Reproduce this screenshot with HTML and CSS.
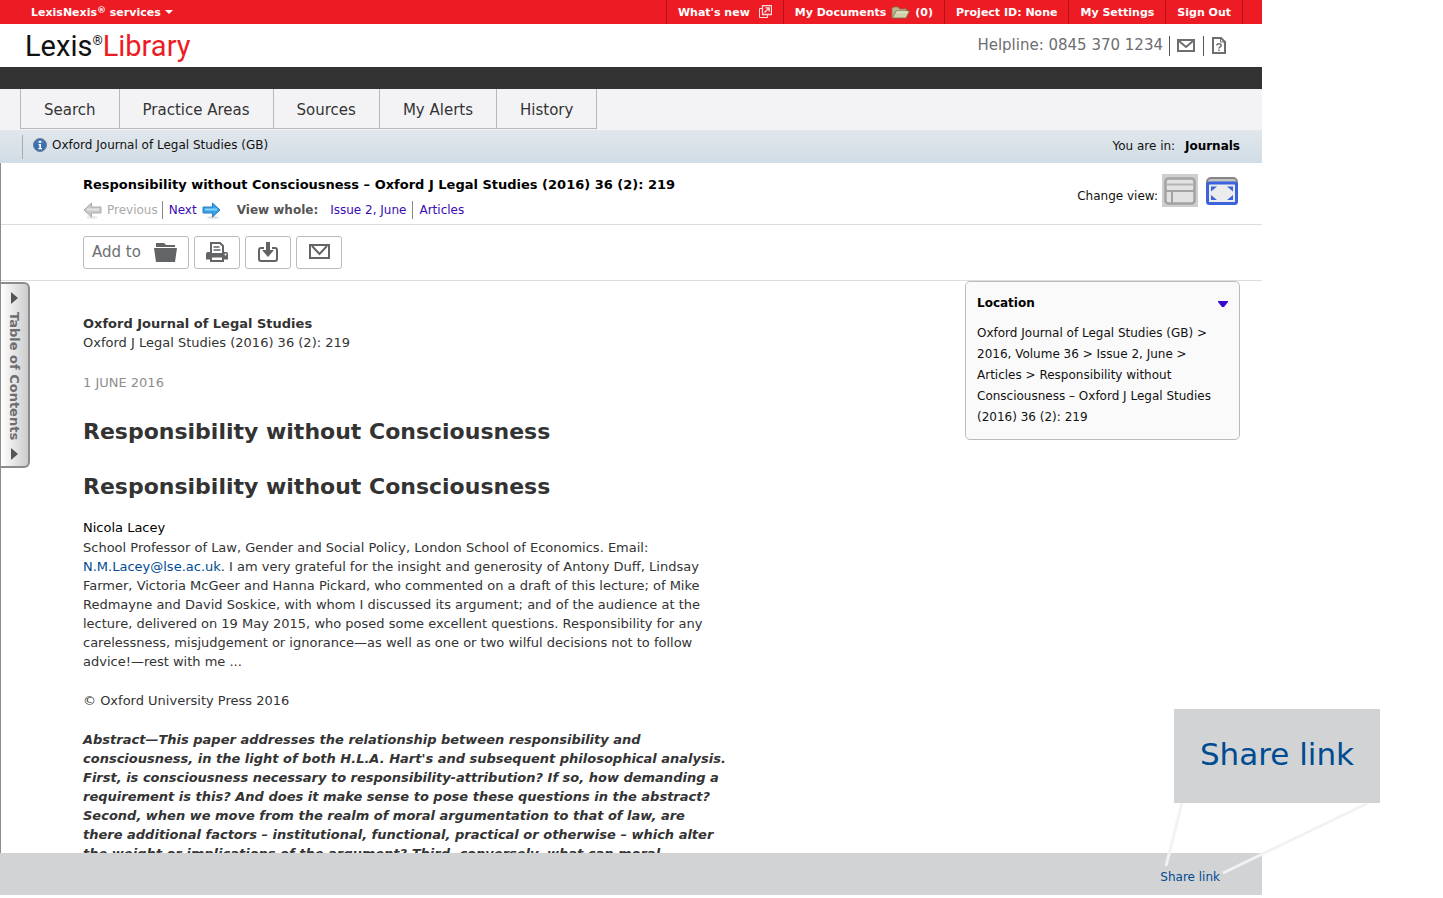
FILE: index.html
```html
<!DOCTYPE html>
<html lang="en">
<head>
<meta charset="utf-8">
<title>Lexis Library - Responsibility without Consciousness</title>
<link rel="stylesheet" href="styles.css">
</head>
<body>
<div class="page">
  <header>
    <div class="topbar">
      <button class="services" type="button"><span>LexisNexis<sup>®</sup> services</span>
        <svg width="8" height="4" viewBox="0 0 8 4"><path d="M0 0h8L4 4z" fill="#fff"/></svg>
      </button>
      <nav class="account" aria-label="Account">
        <a href="#" class="news">What's new
          <svg width="13" height="13" viewBox="0 0 13 13" fill="none" stroke="#ffdcdc"><path d="M3.500 3.500h-3v9h8v-3"/><path d="M3.500.5h9v9h-9z" stroke-width="1.300"/><path d="M5.500 7.500l4.500-4.500M6.500 2.800h3.700v3.700" stroke-width="1.300"/></svg>
        </a>
        <a href="#">My Documents
          <svg width="19" height="13" viewBox="0 0 19 13"><path d="M1 12V2.500L2.500 1h4.500l1.500 2h7v3" fill="#b9b58d" stroke="#817c52" stroke-width=".8"/><path d="M1.500 12L5 5h13.500L15 12z" fill="#d3d1ac" stroke="#777347" stroke-width=".8"/><path d="M5.500 6h11.500" stroke="#f6f5df"/></svg>
          (0)</a>
        <a href="#">Project ID: None</a>
        <a href="#">My Settings</a>
        <a href="#">Sign Out</a>
      </nav>
    </div>
    <div class="brandbar">
      <a class="logo" href="#">Lexis<sup>®</sup><span>Library</span></a>
      <div class="help">
        <span>Helpline: 0845 370 1234</span>
        <a href="#" aria-label="Email us"><svg width="18" height="13" viewBox="0 0 18 13" fill="none" stroke="#6d6e71" stroke-width="2"><path d="M1 1h16v11H1z"/><path d="M2 2l7 6 7-6"/></svg></a>
        <a href="#" aria-label="Help"><svg width="14" height="17" viewBox="0 0 14 17" fill="none" stroke="#6d6e71" stroke-width="2"><path d="M1 1h8l4 4v11H1z"/><path d="M8.500 1v4H13" stroke-width="1"/><path d="M4.800 8.500c0-2.500 4.400-2.200 4.400 0 0 1.300-2.200 1.300-2.200 3M7 12.500v1.500" stroke-width="1.500"/></svg></a>
      </div>
    </div>
    <div class="band"></div>
    <nav class="tabs" aria-label="Main">
      <a href="#">Search</a><a href="#">Practice Areas</a><a href="#">Sources</a><a href="#">My Alerts</a><a href="#">History</a>
    </nav>
    <div class="crumb">
      <div class="source">
        <svg width="14" height="14" viewBox="0 0 14 14"><circle cx="7" cy="7" r="6.500" fill="#3c6faf" stroke="#6c7d98"/><path d="M3 4.500a5 4 0 0 1 8 0" fill="#7ba5d6"/><circle cx="7" cy="3.800" r="1.200" fill="#fff"/><path d="M5.500 6h2.500v4h1v1.300H5.300V10h1V7.200h-.8z" fill="#fff"/></svg>
        Oxford Journal of Legal Studies (GB)
      </div>
      <div class="where">You are in: <b>Journals</b></div>
    </div>
  </header>
  <main>
    <section class="dochead">
      <div>
        <h1>Responsibility without Consciousness – Oxford J Legal Studies (2016) 36 (2): 219</h1>
        <div class="pager">
          <span class="prev"><svg width="19" height="17" viewBox="0 0 19 17"><ellipse cx="9" cy="15.500" rx="6" ry="1.500" fill="#e8e8e8"/><path d="M1 8L8.500 1v4H18v6H8.500v4z" fill="#c9c9c9" stroke="#aaa"/><path d="M4 7.500h12" stroke="#e4e4e4" stroke-width="2"/></svg>Previous</span>
          <a class="next" href="#">Next<svg width="19" height="17" viewBox="0 0 19 17"><ellipse cx="11" cy="15.500" rx="6" ry="1.500" fill="#ddd"/><path d="M18 8L10.500 1v4H1v6h9.500v4z" fill="#35a0e8" stroke="#2d80bd"/><path d="M3 7.500h12" stroke="#8bd0fa" stroke-width="2"/></svg></a>
          <b>View whole:</b>
          <a class="issue" href="#">Issue 2, June</a>
          <a class="articles" href="#">Articles</a>
        </div>
      </div>
      <div class="views">
        <span>Change view:</span>
        <button type="button" aria-label="Standard view" class="current"><svg width="32" height="28" viewBox="0 0 32 28" fill="none" stroke="#a3a3a3"><rect x="1.500" y="1.500" width="29" height="25" rx="3" fill="#e2e2e2" stroke-width="2.500"/><path d="M2 7.500h28" stroke="#b4b4b4" stroke-width="2"/><path d="M2 14h28M8 14v12" stroke-width="2"/></svg></button>
        <button type="button" aria-label="Full screen view"><svg width="32" height="28" viewBox="0 0 32 28"><rect x="1" y="1" width="30" height="25" rx="4" fill="#c4c4c4" stroke="#858585" stroke-width="2"/><rect x="1.500" y="6" width="29" height="20.500" rx="2" fill="#ececec" stroke="#3b63dc" stroke-width="3"/><path d="M5 9.500h6l-6 5zM27 9.500h-6l6 5zM5 23h6l-6-5zM27 23h-6l6-5z" fill="#3b63dc"/></svg></button>
      </div>
    </section>
    <section class="tools">
      <button type="button" class="add">Add to
        <svg width="23" height="19" viewBox="0 0 23 19" fill="#636466"><path d="M2 3V0h8l2 2h9v2H2zM0 5h23l-2 14H2z"/></svg></button>
      <button type="button" aria-label="Print"><svg width="22" height="20" viewBox="0 0 22 20"><path d="M2 10h18q2 0 2 2v5.500H0V12q0-2 2-2z" fill="#636466"/><path d="M5 12V1h9l3 3v8z" fill="#fff" stroke="#636466" stroke-width="2"/><path d="M7.500 5h6M7.500 8h7" stroke="#636466" stroke-width="1.500"/><path d="M5 14.500h12V19H5z" fill="#fff" stroke="#636466" stroke-width="2"/><circle cx="19.500" cy="12.500" r="1" fill="#fff"/></svg></button>
      <button type="button" aria-label="Download"><svg width="20" height="20" viewBox="0 0 20 20" fill="none" stroke="#636466"><path d="M6 6H3Q1 6 1 8v9q0 2 2 2h14q2 0 2-2V8q0-2-2-2h-3" stroke-width="2"/><path d="M8 0h4v8h4l-6 7-6-7h4z" fill="#636466" stroke="none"/></svg></button>
      <button type="button" aria-label="Email"><svg width="21" height="15" viewBox="0 0 21 15" fill="none" stroke="#636466" stroke-width="2"><path d="M1 1h19v13H1z"/><path d="M3 2l7.500 8L18 2"/></svg></button>
    </section>
    <div class="content">
      <button type="button" class="toc">
        <svg width="8" height="12" viewBox="0 0 8 12"><path d="M0 0v12l7-6z" fill="#555"/></svg>
        <span>Table of Contents</span>
        <svg width="8" height="12" viewBox="0 0 8 12"><path d="M0 0v12l7-6z" fill="#555"/></svg>
      </button>
      <article>
        <h3>Oxford Journal of Legal Studies</h3>
        <p>Oxford J Legal Studies (2016) 36 (2): 219</p>
        <p class="date">1 JUNE 2016</p>
        <h2>Responsibility without Consciousness</h2>
        <h2>Responsibility without Consciousness</h2>
        <p class="author">Nicola Lacey</p>
        <p>School Professor of Law, Gender and Social Policy, London School of Economics. Email: <a href="#">N.M.Lacey@lse.ac.uk</a>. I am very grateful for the insight and generosity of Antony Duff, Lindsay Farmer, Victoria McGeer and Hanna Pickard, who commented on a draft of this lecture; of Mike Redmayne and David Soskice, with whom I discussed its argument; and of the audience at the lecture, delivered on 19 May 2015, who posed some excellent questions. Responsibility for any carelessness, misjudgement or ignorance—as well as one or two wilful decisions not to follow advice!—rest with me ...</p>
        <p class="copyright">© Oxford University Press 2016</p>
        <p class="abstract">Abstract—This paper addresses the relationship between responsibility and consciousness, in the light of both H.L.A. Hart's and subsequent philosophical analysis. First, is consciousness necessary to responsibility-attribution? If so, how demanding a requirement is this? And does it make sense to pose these questions in the abstract? Second, when we move from the realm of moral argumentation to that of law, are there additional factors – institutional, functional, practical or otherwise – which alter the weight or implications of the argument? Third, conversely, what can moral</p>
      </article>
      <aside class="location">
        <h4>Location <svg width="10" height="6" viewBox="0 0 10 6"><path d="M0 0h10v1L6 6H4L0 1z" fill="#3a0bcf"/></svg></h4>
        <p>Oxford Journal of Legal Studies (GB) &gt; 2016, Volume 36 &gt; Issue 2, June &gt; Articles &gt; Responsibility without Consciousness – Oxford J Legal Studies (2016) 36 (2): 219</p>
      </aside>
    </div>
  </main>
  <footer>
    <a href="#">Share link</a>
    <svg class="rays" width="220" height="80" viewBox="0 0 220 80" fill="none" stroke="#f2f2f3" stroke-width="3"><path d="M27 5L11 68"/><path d="M213 5L68 75"/></svg>
    <div class="callout">Share link</div>
  </footer>
</div>
</body>
</html>
```
FILE: styles.css
```css
* { box-sizing: border-box; }
body, h1, h2, h3, h4, p { margin: 0; }
body {
  background: #fff;
  color: #333;
  font-family: Verdana, "DejaVu Sans", sans-serif;
  font-size: 13px;
  line-height: 19px;
}
a { color: inherit; text-decoration: none; }
button { font: inherit; color: inherit; margin: 0; padding: 0; border: 0; background: none; }
svg { display: block; flex: none; }

.page {
  display: flex;
  flex-direction: column;
  height: 100vh;
  padding: 0 181px 3px 0;
}

.topbar {
  display: flex;
  justify-content: space-between;
  height: 24px;
  padding: 0 19px 0 31px;
  background: #ed1c24;
  color: #fff;
  font-size: 11px;
  font-weight: bold;
}
.services { display: flex; align-items: center; gap: 4px; }
.services sup { font-size: 9px; line-height: 0; vertical-align: 3px; }
.account { display: flex; border-right: 1px solid #b5121a; }
.account a {
  display: flex;
  align-items: center;
  gap: 5px;
  padding: 0 11px;
  border-left: 1px solid #b5121a;
}
.account .news { gap: 9px; }
.account .news svg { margin-bottom: 2px; }

.brandbar {
  display: flex;
  align-items: center;
  justify-content: space-between;
  height: 43px;
  padding: 0 28px 0 25px;
}
.logo { font-family: Roboto, sans-serif; font-size: 29px; line-height: 40px; color: #111; }
.logo sup { font-size: 13px; line-height: 0; vertical-align: 11px; }
.logo span { color: #ed1c24; }
.help { display: flex; align-items: center; font-size: 15px; color: #6d6e71; }
.help span { padding-right: 6px; }
.help a { display: flex; align-items: center; height: 20px; padding: 0 8px 0 7px; border-left: 1px solid #555; }
.help a + a { padding: 0 8px; }

.band { height: 22px; background: #333; }
.tabs { display: flex; height: 41px; padding: 0 20px 1px; background: #f3f3f6; font-size: 15px; }
.tabs a { display: flex; align-items: center; padding: 3px 23px 0; border: solid #b9b9bc; border-width: 0 1px 1px 0; }
.tabs a:first-child { border-left-width: 1px; }

.crumb {
  display: flex;
  align-items: center;
  justify-content: space-between;
  height: 33px;
  padding: 0 22px;
  background: linear-gradient(#e1e7ec, #d1dce5);
  color: #111;
  font-size: 12px;
}
.source { display: flex; align-items: center; gap: 5px; height: 24px; padding: 0 0 3px 10px; border-left: 1px solid #aaa; }
.where b { margin-left: 6px; color: #000; }

main { flex: 1; display: flex; flex-direction: column; min-height: 0; border-left: 1px solid #8d8d8d; overflow: hidden; }

.dochead {
  display: flex;
  justify-content: space-between;
  flex: none;
  height: 62px;
  padding: 11px 22px 0 82px;
  border-bottom: 1px solid #ddd;
  font-size: 12px;
}
.dochead h1 { font-size: 13px; line-height: 21px; color: #000; }
.pager { display: flex; align-items: center; margin-top: 6px; line-height: 18px; color: #555; }
.pager a { color: #3a0bb5; }
.prev { display: flex; align-items: center; gap: 5px; padding-right: 4px; color: #aaa; }
.next { display: flex; align-items: center; gap: 5px; padding-left: 6px; border-left: 1px solid #888; }
.pager b { margin: 0 12px 0 16px; }
.pager .issue { padding-right: 6px; }
.pager .articles { padding-left: 6px; border-left: 1px solid #888; }
.views { display: flex; align-items: flex-start; color: #111; }
.views span { padding: 13px 4px 0 0; }
.views button { display: flex; align-items: center; justify-content: center; width: 36px; height: 33px; }
.views button + button { margin-left: 6px; }
.views .current { background: #cecece; }

.tools { display: flex; flex: none; gap: 5px; height: 56px; padding: 11px 82px; border-bottom: 1px solid #ddd; }
.tools button {
  display: flex;
  align-items: center;
  justify-content: center;
  width: 46px;
  height: 33px;
  padding-bottom: 2px;
  border: 1px solid #bbb;
  border-radius: 3px;
  color: #6d6e71;
  font-size: 15px;
}
.tools .add { justify-content: space-between; width: 106px; padding: 0 11px 0 8px; }

.content { display: flex; align-items: flex-start; flex: 1; min-height: 0; padding-right: 22px; }
.toc {
  display: flex;
  flex-direction: column;
  align-items: center;
  justify-content: space-between;
  flex: none;
  width: 29px;
  height: 186px;
  margin-top: 1px;
  padding: 8px 0 6px 0;
  border: 2px solid #8c8c90;
  border-left: 0;
  border-radius: 0 6px 6px 0;
  background: linear-gradient(90deg, #fff, #ccc);
  color: #6d6e71;
  font-size: 13px;
  font-weight: bold;
}
.toc span { writing-mode: vertical-rl; }
article { width: 645px; margin-left: 53px; padding-top: 33px; }
article h3 { font-size: 13px; }
article a { color: #004b91; }
article h2 { margin-top: 25px; font-size: 22px; line-height: 30px; }
.date { margin: 21px 0 25px; color: #8d8d8d; }
.author { margin-top: 16px; color: #000; line-height: 20px; }
.copyright { margin: 20px 0; }
.abstract { font-weight: bold; font-style: italic; }

.location {
  width: 275px;
  margin-left: auto;
  padding: 11px 14px 11px 11px;
  border: 1px solid #bbb;
  border-radius: 5px;
  background: #fafafa;
  color: #111;
  font-size: 12px;
  line-height: 21px;
}
.location h4 { display: flex; align-items: center; justify-content: space-between; margin: 0 -3px 9px 0; color: #000; }

footer {
  position: relative;
  display: flex;
  align-items: center;
  justify-content: flex-end;
  flex: none;
  height: 42px;
  padding: 7px 42px 0;
  background: #d1d3d4;
  color: #004b91;
  font-size: 12px;
}
.rays { position: absolute; right: -113px; bottom: 17px; }
.callout {
  position: absolute;
  right: -118px;
  bottom: 92px;
  width: 206px;
  height: 94px;
  background: #d1d3d4;
  font-size: 31px;
  line-height: 90px;
  text-align: center;
}
```
